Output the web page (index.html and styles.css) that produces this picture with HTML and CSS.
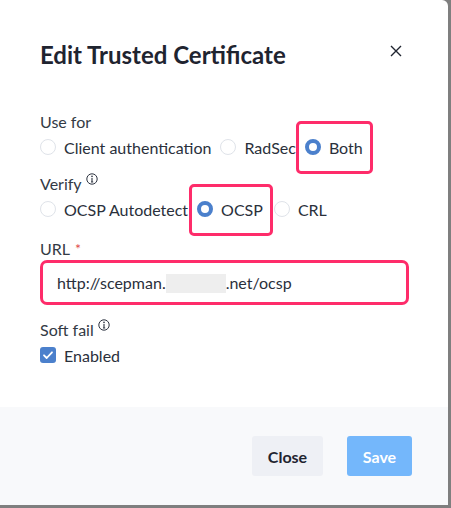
FILE: index.html
```html
<!DOCTYPE html>
<html>
<head>
<meta charset="utf-8">
<link rel="stylesheet" href="styles.css">
</head>
<body>
<div class="modal">
  <div class="header">
    <h1 class="title">Edit Trusted Certificate</h1>
    <svg class="close-x" width="12" height="12" viewBox="0 0 12 12"><path d="M1 1L11 11M11 1L1 11" stroke="#1f2430" stroke-width="1.4" fill="none"/></svg>
  </div>
  <div class="content">
    <div class="label label-first">Use for</div>
    <div class="row">
      <span class="opt"><span class="radio"></span>Client authentication</span>
      <span class="opt"><span class="radio"></span>RadSec</span>
      <span class="opt hl hl-both"><span class="radio on"></span>Both</span>
    </div>
    <div class="label label-gap">Verify <svg class="info" width="12" height="12" viewBox="0 0 12 12"><circle cx="6" cy="6" r="5.2" stroke="#2d3340" stroke-width="1" fill="none"/><circle cx="6" cy="3.4" r="0.8" fill="#2d3340"/><path d="M6 5v4M5 9h2.2" stroke="#2d3340" stroke-width="1.1" fill="none"/></svg></div>
    <div class="row">
      <span class="opt"><span class="radio"></span>OCSP Autodetect</span>
      <span class="opt hl hl-ocsp"><span class="radio on"></span>OCSP</span>
      <span class="opt"><span class="radio"></span>CRL</span>
    </div>
    <div class="label label-url">URL <span class="req">*</span></div>
    <div class="input"><span>http://scepman.</span><span class="blur"></span><span>.net/ocsp</span></div>
    <div class="label label-soft">Soft fail <svg class="info" width="12" height="12" viewBox="0 0 12 12"><circle cx="6" cy="6" r="5.2" stroke="#2d3340" stroke-width="1" fill="none"/><circle cx="6" cy="3.4" r="0.8" fill="#2d3340"/><path d="M6 5v4M5 9h2.2" stroke="#2d3340" stroke-width="1.1" fill="none"/></svg></div>
    <div class="row">
      <span class="opt"><span class="check"><svg width="16" height="16" viewBox="0 0 16 16"><path d="M4 8.3l2.7 2.7L12 5.3" stroke="#fff" stroke-width="1.8" fill="none" stroke-linecap="round" stroke-linejoin="round"/></svg></span>Enabled</span>
    </div>
  </div>
  <div class="footer">
    <button class="btn btn-close">Close</button>
    <button class="btn btn-save">Save</button>
  </div>
</div>
</body>
</html>
```

FILE: styles.css
```css
html, body {
  margin: 0;
  padding: 0;
}
body {
  background: #7f7f7f;
  width: 451px;
  height: 508px;
  overflow: hidden;
  font-family: Lato, "Open Sans", sans-serif;
}
.modal {
  width: 448px;
  height: 505px;
  background: #ffffff;
  border-top-right-radius: 6px;
  display: flex;
  flex-direction: column;
}
.header {
  display: flex;
  justify-content: space-between;
  align-items: center;
  padding: 40px 46px 0 40px;
  height: 30px;
}
.title {
  margin: 0;
  font-size: 24px;
  font-weight: 700;
  line-height: 30px;
  color: #1f2430;
}
.close-x {
  margin-top: -8px;
}
.content {
  padding: 0 39px 0 40px;
  flex: 1;
}
.label {
  font-size: 16px;
  line-height: 22px;
  color: #333a45;
  display: flex;
  align-items: flex-start;
}
.label-first {
  margin-top: 41px;
}
.label-gap {
  margin-top: 12px;
}
.label-url {
  margin-top: 15px;
  margin-bottom: 0;
}
.label-soft {
  margin-top: 14px;
}
.info {
  margin-left: 4px;
  margin-top: 0px;
}
.req {
  color: #e04b4b;
  margin-left: 5px;
  font-size: 14px;
}
.row {
  display: flex;
  align-items: center;
  height: 28px;
}
.opt {
  display: inline-flex;
  align-items: center;
  font-size: 16px;
  color: #2a303b;
  margin-right: 9px;
  position: relative;
}
.radio {
  width: 14px;
  height: 14px;
  border: 1px solid #dfe3e9;
  border-radius: 50%;
  margin-right: 8px;
  box-sizing: content-box;
  flex: none;
}
.radio.on {
  width: 8px;
  height: 8px;
  border: 4px solid #4b80cc;
  background: #fff;
}
.hl::after {
  content: "";
  position: absolute;
  top: -17px;
  bottom: -17px;
  left: -9px;
  right: -10px;
  border: 3px solid #fe2c6a;
  border-radius: 5px;
  box-sizing: border-box;
}
.hl-ocsp::after {
  left: -8px;
  top: -16px;
  bottom: -17px;
}
.hl-ocsp {
  margin-right: 11px;
}
.input {
  height: 45px;
  border: 3px solid #fe2c6a;
  border-radius: 7px;
  box-sizing: border-box;
  display: flex;
  align-items: center;
  padding-left: 14px;
  font-size: 16px;
  color: #2a303b;
}
.blur {
  display: inline-block;
  width: 60px;
  height: 19px;
  background: #eeeeee;
  margin-top: 1px;
}
.check {
  width: 16px;
  height: 16px;
  border-radius: 3px;
  background: #4b80cc;
  margin-right: 8px;
  display: inline-flex;
}
.footer {
  background: #f8f9fb;
  height: 98px;
  display: flex;
  justify-content: flex-end;
  align-items: center;
  gap: 24px;
  padding-right: 36px;
}
.btn {
  height: 40px;
  border: none;
  border-radius: 3px;
  font-family: Lato, "Open Sans", sans-serif;
  font-size: 16px;
  font-weight: 700;
  padding: 0;
}
.btn-close {
  width: 71px;
  background: #eef0f5;
  color: #1f2430;
}
.btn-save {
  width: 65px;
  background: #74b7fb;
  color: #ffffff;
}
```
